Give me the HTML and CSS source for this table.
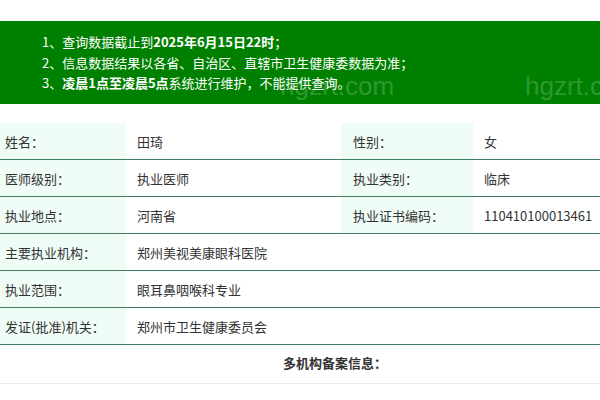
FILE: index.html
```html
<!DOCTYPE html>
<html lang="zh">
<head>
<meta charset="utf-8">
<link rel="stylesheet" href="styles.css">
</head>
<body>
<div class="notice">
  <p class="line">1、查询数据截止到<b>2025年6月15日22时</b>；</p>
  <p class="line">2、信息数据结果以各省、自治区、直辖市卫生健康委数据为准；</p>
  <p class="line">3、<b>凌晨1点至凌晨5点</b>系统进行维护，不能提供查询。</p>
  <span class="wm wm1">hgzrt.com</span>
  <span class="wm wm2">hgzrt.com</span>
</div>
<table class="info">
  <colgroup>
    <col class="c1"><col class="c2"><col class="c3"><col class="c4">
  </colgroup>
  <tr><td class="lbl first">姓名：</td><td>田琦</td><td class="lbl">性别：</td><td>女</td></tr>
  <tr><td class="lbl first">医师级别：</td><td>执业医师</td><td class="lbl">执业类别：</td><td>临床</td></tr>
  <tr><td class="lbl first">执业地点：</td><td>河南省</td><td class="lbl">执业证书编码：</td><td>110410100013461</td></tr>
  <tr><td class="lbl first">主要执业机构：</td><td colspan="3">郑州美视美康眼科医院</td></tr>
  <tr><td class="lbl first">执业范围：</td><td colspan="3">眼耳鼻咽喉科专业</td></tr>
  <tr><td class="lbl first">发证(批准)机关：</td><td colspan="3">郑州市卫生健康委员会</td></tr>
</table>
<div class="multi">多机构备案信息：</div>
</body>
</html>
```

FILE: styles.css
```css
html, body {
  margin: 0;
  padding: 0;
  background: #fff;
}
body {
  font-family: "Noto Sans CJK SC", "Noto Sans", sans-serif;
  font-size: 13px;
  color: #333;
  padding-top: 21px;
}
.notice {
  position: relative;
  overflow: hidden;
  background: #008000;
  color: #fff;
  padding: 11px 0 11px 42px;
  height: 61px;
}
.line {
  margin: 0;
  line-height: 20.5px;
  white-space: nowrap;
  position: relative;
  z-index: 1;
}
.line b {
  font-weight: bold;
}
.wm {
  position: absolute;
  font-family: "Liberation Sans", sans-serif;
  font-size: 26px;
  line-height: 30px;
  color: rgba(255, 255, 255, 0.2);
  top: 50px;
}
.wm1 { left: 280px; }
.wm2 { left: 525px; }
.info {
  margin-top: 19px;
  width: 600px;
  border-collapse: collapse;
  table-layout: fixed;
}
.c1 { width: 126px; }
.c2 { width: 215px; }
.c3 { width: 132px; }
.c4 { width: 127px; }
.info td {
  height: 36px;
  padding: 0 0 0 11px;
  border-bottom: 1px solid #3f7f5f;
  white-space: nowrap;
  vertical-align: middle;
}
.info td.lbl {
  background: #f0fcf6;
}
.info td.first {
  padding-left: 5px;
}
.info td.lbl:not(.first) {
  padding-left: 12px;
}
.multi {
  height: 38px;
  line-height: 36px;
  text-align: center;
  font-weight: bold;
  border-bottom: 1px solid #ececec;
  padding-left: 70px;
}
```
